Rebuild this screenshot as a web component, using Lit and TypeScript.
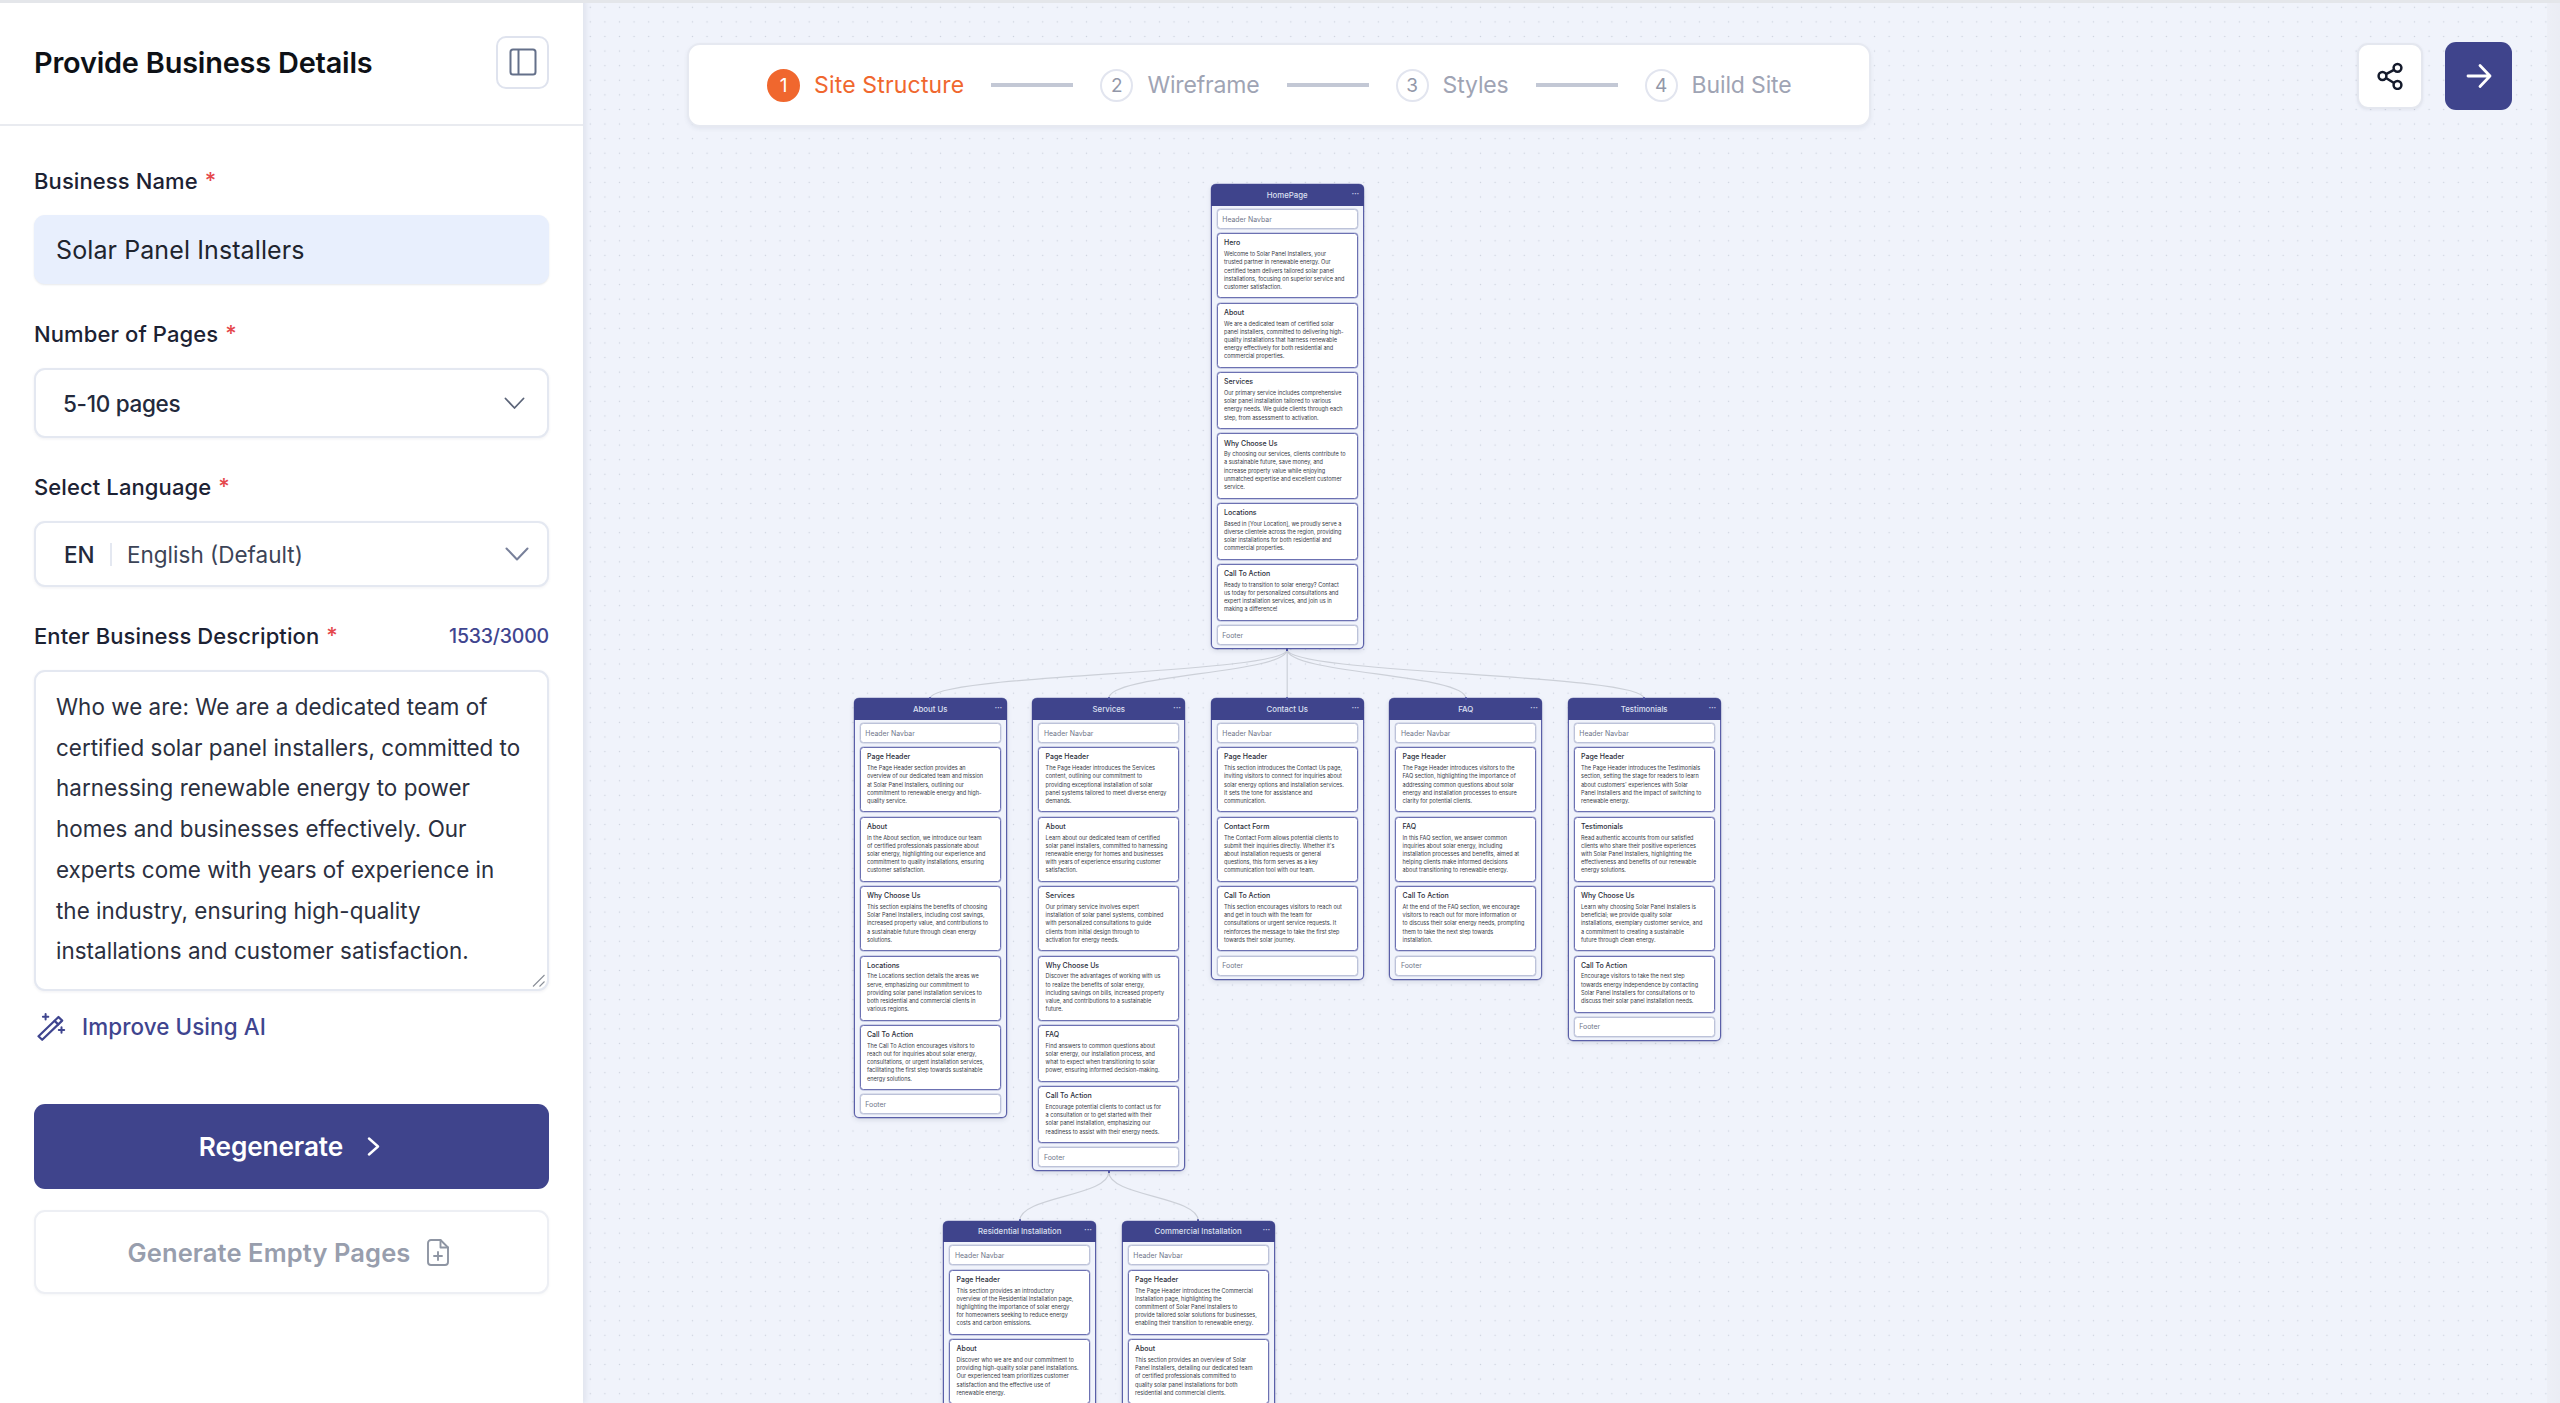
import { LitElement, html, css, svg } from "lit";
import { customElement } from "lit/decorators.js";

type Sec = [string, string];
interface PageNode { name: string; x: number; y: number; secs: Sec[]; footer?: boolean; }

const OX = 583;
const pages: PageNode[] = [
  { name: "HomePage", x: 1210.7, y: 184.3, footer: true, secs: [
    ["Hero", "Welcome to Solar Panel Installers, your|trusted partner in renewable energy. Our|certified team delivers tailored solar panel|installations, focusing on superior service and|customer satisfaction."],
    ["About", "We are a dedicated team of certified solar|panel installers, committed to delivering high-|quality installations that harness renewable|energy effectively for both residential and|commercial properties."],
    ["Services", "Our primary service includes comprehensive|solar panel installation tailored to various|energy needs. We guide clients through each|step, from assessment to activation."],
    ["Why Choose Us", "By choosing our services, clients contribute to|a sustainable future, save money, and|increase property value while enjoying|unmatched expertise and excellent customer|service."],
    ["Locations", "Based in [Your Location], we proudly serve a|diverse clientele across the region, providing|solar installations for both residential and|commercial properties."],
    ["Call To Action", "Ready to transition to solar energy? Contact|us today for personalized consultations and|expert installation services, and join us in|making a difference!"],
  ]},
  { name: "About Us", x: 853.7, y: 698.3, footer: true, secs: [
    ["Page Header", "The Page Header section provides an|overview of our dedicated team and mission|at Solar Panel Installers, outlining our|commitment to renewable energy and high-|quality service."],
    ["About", "In the About section, we introduce our team|of certified professionals passionate about|solar energy, highlighting our experience and|commitment to quality installations, ensuring|customer satisfaction."],
    ["Why Choose Us", "This section explains the benefits of choosing|Solar Panel Installers, including cost savings,|increased property value, and contributions to|a sustainable future through clean energy|solutions."],
    ["Locations", "The Locations section details the areas we|serve, emphasizing our commitment to|providing solar panel installation services to|both residential and commercial clients in|various regions."],
    ["Call To Action", "The Call To Action encourages visitors to|reach out for inquiries about solar energy,|consultations, or urgent installation services,|facilitating the first step towards sustainable|energy solutions."],
  ]},
  { name: "Services", x: 1032.3, y: 698.3, footer: true, secs: [
    ["Page Header", "The Page Header introduces the Services|content, outlining our commitment to|providing exceptional installation of solar|panel systems tailored to meet diverse energy|demands."],
    ["About", "Learn about our dedicated team of certified|solar panel installers, committed to harnessing|renewable energy for homes and businesses|with years of experience ensuring customer|satisfaction."],
    ["Services", "Our primary service involves expert|installation of solar panel systems, combined|with personalized consultations to guide|clients from initial design through to|activation for energy needs."],
    ["Why Choose Us", "Discover the advantages of working with us|to realize the benefits of solar energy,|including savings on bills, increased property|value, and contributions to a sustainable|future."],
    ["FAQ", "Find answers to common questions about|solar energy, our installation process, and|what to expect when transitioning to solar|power, ensuring informed decision-making."],
    ["Call To Action", "Encourage potential clients to contact us for|a consultation or to get started with their|solar panel installation, emphasizing our|readiness to assist with their energy needs."],
  ]},
  { name: "Contact Us", x: 1210.7, y: 698.3, footer: true, secs: [
    ["Page Header", "This section introduces the Contact Us page,|inviting visitors to connect for inquiries about|solar energy options and installation services.|It sets the tone for assistance and|communication."],
    ["Contact Form", "The Contact Form allows potential clients to|submit their inquiries directly. Whether it's|about installation requests or general|questions, this form serves as a key|communication tool with our team."],
    ["Call To Action", "This section encourages visitors to reach out|and get in touch with the team for|consultations or urgent service requests. It|reinforces the message to take the first step|towards their solar journey."],
  ]},
  { name: "FAQ", x: 1389.3, y: 698.3, footer: true, secs: [
    ["Page Header", "The Page Header introduces visitors to the|FAQ section, highlighting the importance of|addressing common questions about solar|energy and installation processes to ensure|clarity for potential clients."],
    ["FAQ", "In this FAQ section, we answer common|inquiries about solar energy, including|installation processes and benefits, aimed at|helping clients make informed decisions|about transitioning to renewable energy."],
    ["Call To Action", "At the end of the FAQ section, we encourage|visitors to reach out for more information or|to discuss their solar energy needs, prompting|them to take the next step towards|installation."],
  ]},
  { name: "Testimonials", x: 1567.7, y: 698.3, footer: true, secs: [
    ["Page Header", "The Page Header introduces the Testimonials|section, setting the stage for readers to learn|about customers' experiences with Solar|Panel Installers and the impact of switching to|renewable energy."],
    ["Testimonials", "Read authentic accounts from our satisfied|clients who share their positive experiences|with Solar Panel Installers, highlighting the|effectiveness and benefits of our renewable|energy solutions."],
    ["Why Choose Us", "Learn why choosing Solar Panel Installers is|beneficial; we provide quality solar|installations, exemplary customer service, and|a commitment to creating a sustainable|future through clean energy."],
    ["Call To Action", "Encourage visitors to take the next step|towards energy independence by contacting|Solar Panel Installers for consultations or to|discuss their solar panel installation needs."],
  ]},
  { name: "Residential Installation", x: 943.3, y: 1220.7, secs: [
    ["Page Header", "This section provides an introductory|overview of the Residential Installation page,|highlighting the importance of solar energy|for homeowners seeking to reduce energy|costs and carbon emissions."],
    ["About", "Discover who we are and our commitment to|providing high-quality solar panel installations.|Our experienced team prioritizes customer|satisfaction and the effective use of|renewable energy."],
  ]},
  { name: "Commercial Installation", x: 1121.7, y: 1220.7, secs: [
    ["Page Header", "The Page Header introduces the Commercial|Installation page, highlighting the|commitment of Solar Panel Installers to|provide tailored solar solutions for businesses,|enabling their transition to renewable energy."],
    ["About", "This section provides an overview of Solar|Panel Installers, detailing our dedicated team|of certified professionals committed to|quality solar panel installations for both|residential and commercial clients."],
  ]},
];

const W = 153;
const edges: [number, number, number][] = [
  [1287.2, 649.5, 930.2], [1287.2, 649.5, 1108.8], [1287.2, 649.5, 1287.2], [1287.2, 649.5, 1465.8], [1287.2, 649.5, 1644],
  [1108.8, 1172, 1019.8], [1108.8, 1172, 1198.2],
];
const edgeTargetY = (sy: number) => (sy < 700 ? 698.3 : 1220.7);

const description = [
  "Who we are: We are a dedicated team of",
  "certified solar panel installers, committed to",
  "harnessing renewable energy to power",
  "homes and businesses effectively. Our",
  "experts come with years of experience in",
  "the industry, ensuring high-quality",
  "installations and customer satisfaction.",
];

const steps = [
  { n: 1, label: "Site Structure", active: true },
  { n: 2, label: "Wireframe", active: false },
  { n: 3, label: "Styles", active: false },
  { n: 4, label: "Build Site", active: false },
];

@customElement("app-root")
export class AppRoot extends LitElement {
  static styles = css`
    :host {
      display: flex;
      position: relative;
      width: 2560px;
      height: 1403px;
      overflow: hidden;
      font-family: "Inter", "Liberation Sans", sans-serif;
      background: #f0f3fb;
    }
    .topline { position: absolute; left: 0; right: 0; top: 0; height: 3px; background: #e4e6ea; z-index: 5; }

    /* sidebar */
    .side {
      width: 583px; flex: none; background: #fff; z-index: 3;
      box-shadow: 3px 0 5px rgba(90, 100, 130, 0.1);
      display: flex; flex-direction: column;
    }
    .side-head {
      height: 126px; box-sizing: border-box; padding: 0 34px;
      border-bottom: 2px solid #e9ebf0;
      display: flex; align-items: center; justify-content: space-between;
    }
    .side-head h1 { margin: 0; font-size: 28.9px; font-weight: 600; color: #0e1116; letter-spacing: -0.2px; }
    .toggle {
      width: 53px; height: 53px; box-sizing: border-box; border: 2px solid #dfe3ee; border-radius: 10px;
      display: flex; align-items: center; justify-content: center; background: #fff;
    }
    .form { padding: 42px 34px 0; display: flex; flex-direction: column; }
    .label { font-size: 22px; line-height: 26px; font-weight: 500; color: #1c2233; display: flex; justify-content: space-between; align-items: center; letter-spacing: 0.1px; }
    .label b { color: #e5484d; font-weight: 500; margin-left: 7px; position: relative; top: -1px; }
    .count { font-size: 19.5px; font-weight: 500; color: #3f458f; letter-spacing: -0.2px; }
    .field { box-sizing: border-box; border-radius: 11px; display: flex; align-items: center; font-size: 25px; margin: 21px 0 36px; }
    .filled { height: 69px; margin-top: 21px; margin-bottom: 37px; background: #e8effd; padding: 0 22px; color: #20242e; box-shadow: 0 1px 2px rgba(60,70,100,.12); letter-spacing: 0.1px; }
    .select { background: #fff; border: 2px solid #e4e8f1; box-shadow: 0 1px 3px rgba(60,70,100,.08); justify-content: space-between; }
    .pages { height: 70px; padding: 0 22px 0 27px; font-size: 22.5px; font-weight: 500; color: #232a3c; letter-spacing: -0.3px; }
    .lang { height: 66px; padding: 0 18px 0 28px; margin-bottom: 36px; color: #3c4457; font-size: 22.5px; letter-spacing: 0; }
    .lang .l { display: flex; align-items: center; }
    .lang .code { font-weight: 500; color: #232a3c; width: 46px; letter-spacing: 0; }
    .lang .div { width: 2px; height: 23px; background: #e4e8f1; margin-right: 15px; }
    .textarea {
      position: relative; display: block; height: 321px; box-sizing: border-box; margin: 21px 0 20px;
      border: 2px solid #e4e8f1; border-radius: 11px; padding: 15px 20px 0; background: #fff;
      font-size: 22.4px; line-height: 40.7px; color: #2b3040; box-shadow: 0 1px 3px rgba(60,70,100,.08);
    }
    .textarea div { white-space: nowrap; letter-spacing: 0.04px; }
    .grip { position: absolute; right: 1px; bottom: 1px; }
    .improve { height: 30px; display: flex; align-items: center; gap: 16px; color: #3f458f; font-size: 22.4px; font-weight: 500; margin-left: 3px; letter-spacing: 0.1px; }
    .regen {
      margin-top: 63px; height: 85px; border-radius: 11px; background: #3f448c; color: #fff;
      display: flex; align-items: center; justify-content: center; gap: 24px; padding-right: 4px; font-size: 26.2px; font-weight: 600; letter-spacing: -0.1px;
    }
    .empty {
      margin-top: 21px; height: 84px; box-sizing: border-box; border-radius: 11px; border: 2px solid #edeff4; background: #fff;
      display: flex; align-items: center; justify-content: center; gap: 17px; padding-right: 6px; font-size: 25.5px; font-weight: 600; color: #989ead; letter-spacing: 0.1px;
      box-shadow: 0 1px 3px rgba(60,70,100,.05);
    }

    /* canvas */
    .canvas {
      position: relative; flex: 1; overflow: hidden; background-color: #f0f3fb;
      background-image: radial-gradient(circle, #cdd2de 0.8px, transparent 1px);
      background-size: 14.6px 14.6px;
    }
    .right-strip { position: absolute; right: 0; top: 0; bottom: 0; width: 13px; background: linear-gradient(90deg, #eceef5, #e9ebf2); z-index: 2; opacity: .8; }
    .edges { position: absolute; left: 0; top: 0; width: 100%; height: 100%; }
    .overlay {
      position: absolute; left: 104px; right: 48px; top: 42px; z-index: 4;
      display: flex; justify-content: space-between; align-items: flex-start;
    }
    .stepper {
      width: 1184px; height: 84px; box-sizing: border-box; margin-top: 1px; padding-left: 78px; background: #fff;
      border: 2px solid #e6e9f1; border-radius: 13px; box-shadow: 0 2px 4px rgba(60,70,100,.07);
      display: flex; align-items: center;
    }
    .step { display: flex; align-items: center; gap: 14px; font-size: 23px; color: #9fa4b4; letter-spacing: -0.15px; }
    .step.on { color: #f0672e; letter-spacing: 0.17px; }
    .circle {
      width: 33px; height: 33px; box-sizing: border-box; border-radius: 50%; border: 2px solid #e2e5ef;
      display: flex; align-items: center; justify-content: center; font-size: 19px; color: #9297a8; letter-spacing: 0;
    }
    .step.on .circle { background: #f0672e; border-color: #f0672e; color: #fff; }
    .bar { width: 82px; height: 3.5px; background: #c3c8d5; margin: 0 27px; flex: none; }
    .actions { display: flex; gap: 22px; }
    .act { width: 66px; height: 66px; box-sizing: border-box; border-radius: 11px; display: flex; align-items: center; justify-content: center; }
    .share { margin-top: 1px; background: #fff; border: 2px solid #e4e7ef; box-shadow: 0 1px 3px rgba(60,70,100,.08); }
    .next { width: 67px; height: 68px; background: #3f448c; }

    /* page nodes */
    .node {
      position: absolute; width: ${W}px; box-sizing: border-box; border: 1px solid #5a5fa8; border-top: 0;
      border-radius: 5px; background: #f0f3fb; padding-bottom: 3px;
      box-shadow: 0 0 0 0.4px rgba(83, 88, 160, .5), 0 2px 5px rgba(60,70,100,.14);
    }
    .nhead {
      height: 21.4px; margin: 0 -1px; background: #3f448c; border-radius: 5px 5px 0 0; color: #dde0f2;
      font-size: 7.8px; font-weight: 500; display: flex; align-items: center; justify-content: center; position: relative;
    }
    .more { position: absolute; right: 4.6px; top: 4.6px; font-size: 9px; line-height: 9px; letter-spacing: -0.2px; color: #c9cce6; }
    .nbody { padding: 3.4px 5px 0; display: flex; flex-direction: column; gap: 4.3px; }
    .slot {
      height: 20px; box-sizing: border-box; border: 1px solid #bcc2d9; border-radius: 3.5px; background: #fff;
      display: flex; align-items: center; padding-left: 4.6px; font-size: 6.9px; color: #70768a;
      box-shadow: 0 0 0 0.4px rgba(179, 185, 211, .7);
    }
    .box {
      box-sizing: border-box; border: 1px solid #6c71b2; border-radius: 3.5px; background: #fff; padding: 5.1px 5.5px 6.3px 6.3px;
      box-shadow: 0 0 0 0.4px rgba(98, 103, 172, .5);
    }
    .box h4 { margin: 0 0 2.2px; height: 8.6px; font-size: 7px; line-height: 8.6px; font-weight: 500; color: #2b2e3a; }
    .ln { display: block; height: 8.2px; font-size: 5.55px; line-height: 8.2px; color: #363a46; white-space: nowrap; }
    .dot { position: absolute; width: 2.6px; height: 2.6px; border-radius: 50%; background: #4d52a0; }
  `;

  private renderNode(p: PageNode) {
    const style = `left:${p.x - OX}px;top:${p.y}px`;
    return html`<div class="node" style=${style}>
      <div class="nhead">${p.name}<span class="more">···</span></div>
      <div class="nbody">
        <div class="slot">Header Navbar</div>
        ${p.secs.map(([t, d]) => html`<div class="box"><h4>${t}</h4>${d.split("|").map((l) => html`<span class="ln">${l}</span>`)}</div>`)}
        ${p.footer ? html`<div class="slot">Footer</div>` : ""}
      </div>
    </div>`;
  }

  render() {
    return html`
      <div class="topline"></div>
      <aside class="side">
        <div class="side-head">
          <h1>Provide Business Details</h1>
          <div class="toggle">
            <svg width="28" height="28" viewBox="0 0 28 28" fill="none" stroke="#64708a" stroke-width="2"><rect x="1.5" y="1.5" width="25" height="25" rx="2.5"/><path d="M9.5 1.5v25"/></svg>
          </div>
        </div>
        <div class="form">
          <div class="label"><span>Business Name<b>*</b></span></div>
          <div class="field filled">Solar Panel Installers</div>
          <div class="label"><span>Number of Pages<b>*</b></span></div>
          <div class="field select pages">5-10 pages
            <svg width="21" height="13" viewBox="0 0 21 13" fill="none" stroke="#5b6478" stroke-width="1.8" stroke-linecap="round" stroke-linejoin="round"><path d="M1.5 1.5 10.5 11 19.5 1.5"/></svg>
          </div>
          <div class="label"><span>Select Language<b>*</b></span></div>
          <div class="field select lang">
            <span class="l"><span class="code">EN</span><span class="div"></span>English (Default)</span>
            <svg width="24" height="14" viewBox="0 0 24 14" fill="none" stroke="#78809a" stroke-width="2" stroke-linecap="round" stroke-linejoin="round"><path d="M1.5 1.5 12 12.5 22.5 1.5"/></svg>
          </div>
          <div class="label"><span>Enter Business Description<b>*</b></span><span class="count">1533/3000</span></div>
          <div class="textarea">
            ${description.map((l) => html`<div>${l}</div>`)}
            <svg class="grip" width="14" height="14" viewBox="0 0 14 14" fill="none" stroke="#8a8f98" stroke-width="1.1"><path d="M1 12.5 12.5 1M7.5 12.5 12.5 7.5"/></svg>
          </div>
          <div class="improve">
            <svg width="29" height="29" viewBox="0 0 29 29" fill="none" stroke="#3f458f" stroke-width="2.2" stroke-linejoin="round" stroke-linecap="round">
              <path d="M1.5 24.2 21.5 5 25.2 8.6 5.2 27.8Z"/><path d="M17.6 8.9 21.2 12.4"/>
              <path d="M8.6 2v5.4M5.9 4.7h5.4" stroke-width="2"/><path d="M24.5 15.3v5.4M21.8 18h5.4" stroke-width="2"/>
            </svg>
            Improve Using AI
          </div>
          <div class="regen">Regenerate
            <svg width="13" height="19" viewBox="0 0 13 19" fill="none" stroke="#fff" stroke-width="2.4" stroke-linecap="round" stroke-linejoin="round"><path d="M2 1.5 11 9.5 2 17.5"/></svg>
          </div>
          <div class="empty">Generate Empty Pages
            <svg width="22" height="27" viewBox="0 0 22 27" fill="none" stroke="#8e95a3" stroke-width="1.9" stroke-linecap="round" stroke-linejoin="round"><path d="M13.5 1H4a3 3 0 0 0-3 3v19a3 3 0 0 0 3 3h14a3 3 0 0 0 3-3V8.5Z"/><path d="M13.5 1v7.5H21"/><path d="M11 13v8M7 17h8"/></svg>
          </div>
        </div>
      </aside>
      <main class="canvas">
        <svg class="edges" fill="none" stroke="#ccd0d8" stroke-width="1.2">
          ${edges.map(([sx, sy, tx]) => {
            const ty = edgeTargetY(sy);
            const m = (sy + ty) / 2;
            return svg`<path d="M${sx - OX} ${sy}C${sx - OX} ${m} ${tx - OX} ${m} ${tx - OX} ${ty}"/>`;
          })}
        </svg>
        ${pages.map((p) => this.renderNode(p))}
        ${edges.map(([sx, sy, tx]) => html`
          <span class="dot" style="left:${sx - OX - 1.3}px;top:${sy - 1.3}px"></span>
          <span class="dot" style="left:${tx - OX - 1.3}px;top:${edgeTargetY(sy) - 1.3}px"></span>`)}
        <div class="right-strip"></div>
        <div class="overlay">
          <div class="stepper">
            ${steps.map((s, i) => html`
              <div class="step ${s.active ? "on" : ""}"><span class="circle">${s.n}</span>${s.label}</div>
              ${i < steps.length - 1 ? html`<span class="bar"></span>` : ""}`)}
          </div>
          <div class="actions">
            <div class="act share">
              <svg width="28" height="28" viewBox="0 0 28 28" fill="none" stroke="#141a2b" stroke-width="2.5"><circle cx="21.5" cy="5.8" r="3.9"/><circle cx="6.5" cy="14" r="3.9"/><circle cx="21.5" cy="23" r="3.9"/><path d="M10 12.2 18 7.8M10 16 18 21"/></svg>
            </div>
            <div class="act next">
              <svg width="26" height="26" viewBox="0 0 26 26" fill="none" stroke="#fff" stroke-width="2.8" stroke-linecap="round" stroke-linejoin="round"><path d="M2 13H24M14 2.5 24 13 14 23.5"/></svg>
            </div>
          </div>
        </div>
      </main>
    `;
  }
}
